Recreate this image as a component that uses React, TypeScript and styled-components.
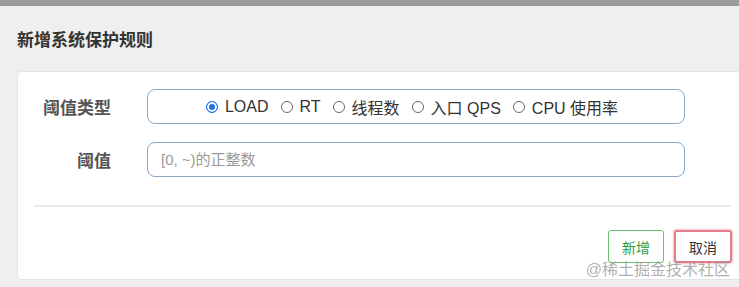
import styled, { createGlobalStyle } from 'styled-components';

const GlobalStyle = createGlobalStyle`
  html, body {
    margin: 0;
    padding: 0;
    background: #efefef;
    overflow: hidden;
  }
  body {
    font-family: "Liberation Sans", "Noto Sans CJK SC", sans-serif;
  }
`;

const Page = styled.div`
  position: relative;
  width: 739px;
  height: 287px;
  overflow: hidden;
`;

const TopBar = styled.div`
  height: 6px;
  background: #9b9b9b;
`;

const Header = styled.div`
  display: flex;
  align-items: center;
  height: 65px;
  padding-left: 17px;
  box-sizing: border-box;
`;

const Title = styled.h4`
  margin: 0;
  font-size: 17px;
  font-weight: 700;
  color: #333;
`;

const Card = styled.div`
  margin-left: 17px;
  width: 735px;
  height: 209px;
  box-sizing: border-box;
  background: #fff;
  border: 1px solid #e3e3e3;
  border-radius: 4px;
  padding-top: 17px;
`;

const Row = styled.div`
  display: flex;
  align-items: center;
  margin-bottom: 18px;
`;

const Label = styled.label`
  width: 93px;
  padding-right: 36px;
  text-align: right;
  font-size: 17px;
  font-weight: 700;
  color: #555;
`;

const Box = styled.div<{ $center?: boolean }>`
  display: flex;
  align-items: center;
  justify-content: ${(p) => (p.$center ? 'center' : 'flex-start')};
  width: 538px;
  height: 35px;
  box-sizing: border-box;
  border: 1px solid #88a8c9;
  border-radius: 8px;
  padding: ${(p) => (p.$center ? '0 8px 0 0' : '0 13px')};
`;

const RadioItem = styled.label`
  display: flex;
  align-items: center;
  gap: 7px;
  margin: 0 6px;
  font-size: 16px;
  color: #333;
`;

const RadioDot = styled.span<{ $checked?: boolean }>`
  width: 12px;
  height: 12px;
  box-sizing: border-box;
  border-radius: 50%;
  border: 1px solid ${(p) => (p.$checked ? '#1a73e8' : '#666')};
  background: ${(p) => (p.$checked ? '#1a73e8' : '#fff')};
  box-shadow: ${(p) => (p.$checked ? 'inset 0 0 0 2px #fff' : 'none')};
`;

const Input = styled.input`
  flex: 1;
  padding: 0;
  border: none;
  outline: none;
  font-family: inherit;
  font-size: 15px;
  color: #333;
  background: transparent;
  &::placeholder {
    color: #999;
  }
`;

const Divider = styled.hr`
  margin: 28px 20px 0 16px;
  border: none;
  border-top: 2px solid #ebebeb;
`;

const Footer = styled.div`
  display: flex;
  justify-content: flex-end;
  gap: 10px;
  padding: 23px 19px 0 0;
`;

const Button = styled.button<{ $variant: 'ok' | 'cancel' }>`
  height: 33px;
  box-sizing: border-box;
  padding: 0 13px;
  font-family: inherit;
  font-size: 14px;
  border-radius: 3px;
  background: #fff;
  color: ${(p) => (p.$variant === 'ok' ? '#2f9e3f' : '#333')};
  border: ${(p) => (p.$variant === 'ok' ? '1px solid #6cc070' : '2px solid #e47b8b')};
  box-shadow: ${(p) => (p.$variant === 'cancel' ? '0 0 2px 1px rgba(228,123,139,0.45)' : 'none')};
`;

const Watermark = styled.div`
  position: absolute;
  right: 9px;
  bottom: 7px;
  font-size: 16px;
  color: rgba(150, 150, 150, 0.75);
  pointer-events: none;
`;

const options = ['LOAD', 'RT', '线程数', '入口 QPS', 'CPU 使用率'];

const App = () => {
  return (
    <Page>
      <GlobalStyle />
      <TopBar />
      <Header>
        <Title>新增系统保护规则</Title>
      </Header>
      <Card>
        <Row>
          <Label>阈值类型</Label>
          <Box $center>
            {options.map((o, i) => (
              <RadioItem key={o}>
                <RadioDot $checked={i === 0} />
                {o}
              </RadioItem>
            ))}
          </Box>
        </Row>
        <Row>
          <Label>阈值</Label>
          <Box>
            <Input placeholder="[0, ~)的正整数" />
          </Box>
        </Row>
        <Divider />
        <Footer>
          <Button $variant="ok">新增</Button>
          <Button $variant="cancel">取消</Button>
        </Footer>
      </Card>
      <Watermark>@稀土掘金技术社区</Watermark>
    </Page>
  );
};

export default App;
